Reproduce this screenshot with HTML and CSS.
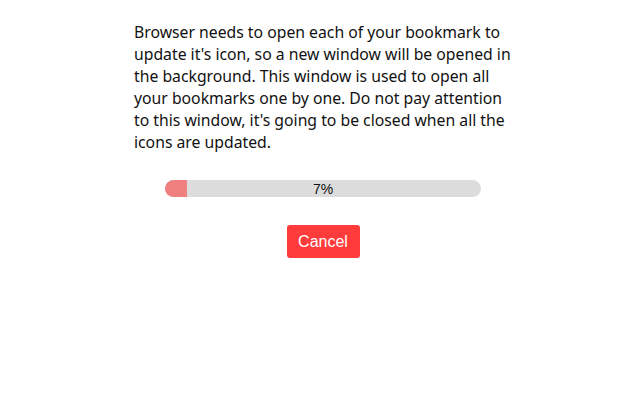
FILE: index.html
```html
<!DOCTYPE html>
<html>
<head>
<meta charset="utf-8">
<link rel="stylesheet" href="styles.css">
</head>
<body>
<div class="wrap">
  <p class="msg">Browser needs to open each of your bookmark to update it's icon, so a new window will be opened in the background. This window is used to open all your bookmarks one by one. Do not pay attention to this window, it's going to be closed when all the icons are updated.</p>
  <div class="progress">
    <div class="fill" style="width:7%"></div>
    <span class="label">7%</span>
  </div>
  <div class="actions">
    <button class="cancel">Cancel</button>
  </div>
</div>
</body>
</html>
```
FILE: styles.css
```css
html, body {
  margin: 0;
  padding: 0;
  background: #fff;
}
body {
  font-family: "Noto Sans", "Open Sans", sans-serif;
  color: #111;
}
.wrap {
  width: 378px;
  margin: 0 auto;
  padding: 21px 0 0 6px;
  display: flex;
  flex-direction: column;
  align-items: center;
}
.msg {
  margin: 0;
  font-size: 15.75px;
  line-height: 22px;
  align-self: stretch;
}
.progress {
  position: relative;
  margin-top: 27px;
  width: 316px;
  height: 17px;
  border-radius: 9px;
  background: #dcdcdc;
  overflow: hidden;
}
.fill {
  height: 100%;
  background: #f08080;
}
.label {
  position: absolute;
  inset: 0;
  text-align: center;
  font-family: "Liberation Sans", Arial, sans-serif;
  font-size: 14px;
  line-height: 18px;
  color: #111;
}
.actions {
  margin-top: 28px;
}
.cancel {
  font-family: "Liberation Sans", Arial, sans-serif;
  font-size: 16px;
  color: #fff;
  background: #ff3b3b;
  border: none;
  border-radius: 3px;
  width: 73px;
  height: 33px;
  padding: 0;
}
```
